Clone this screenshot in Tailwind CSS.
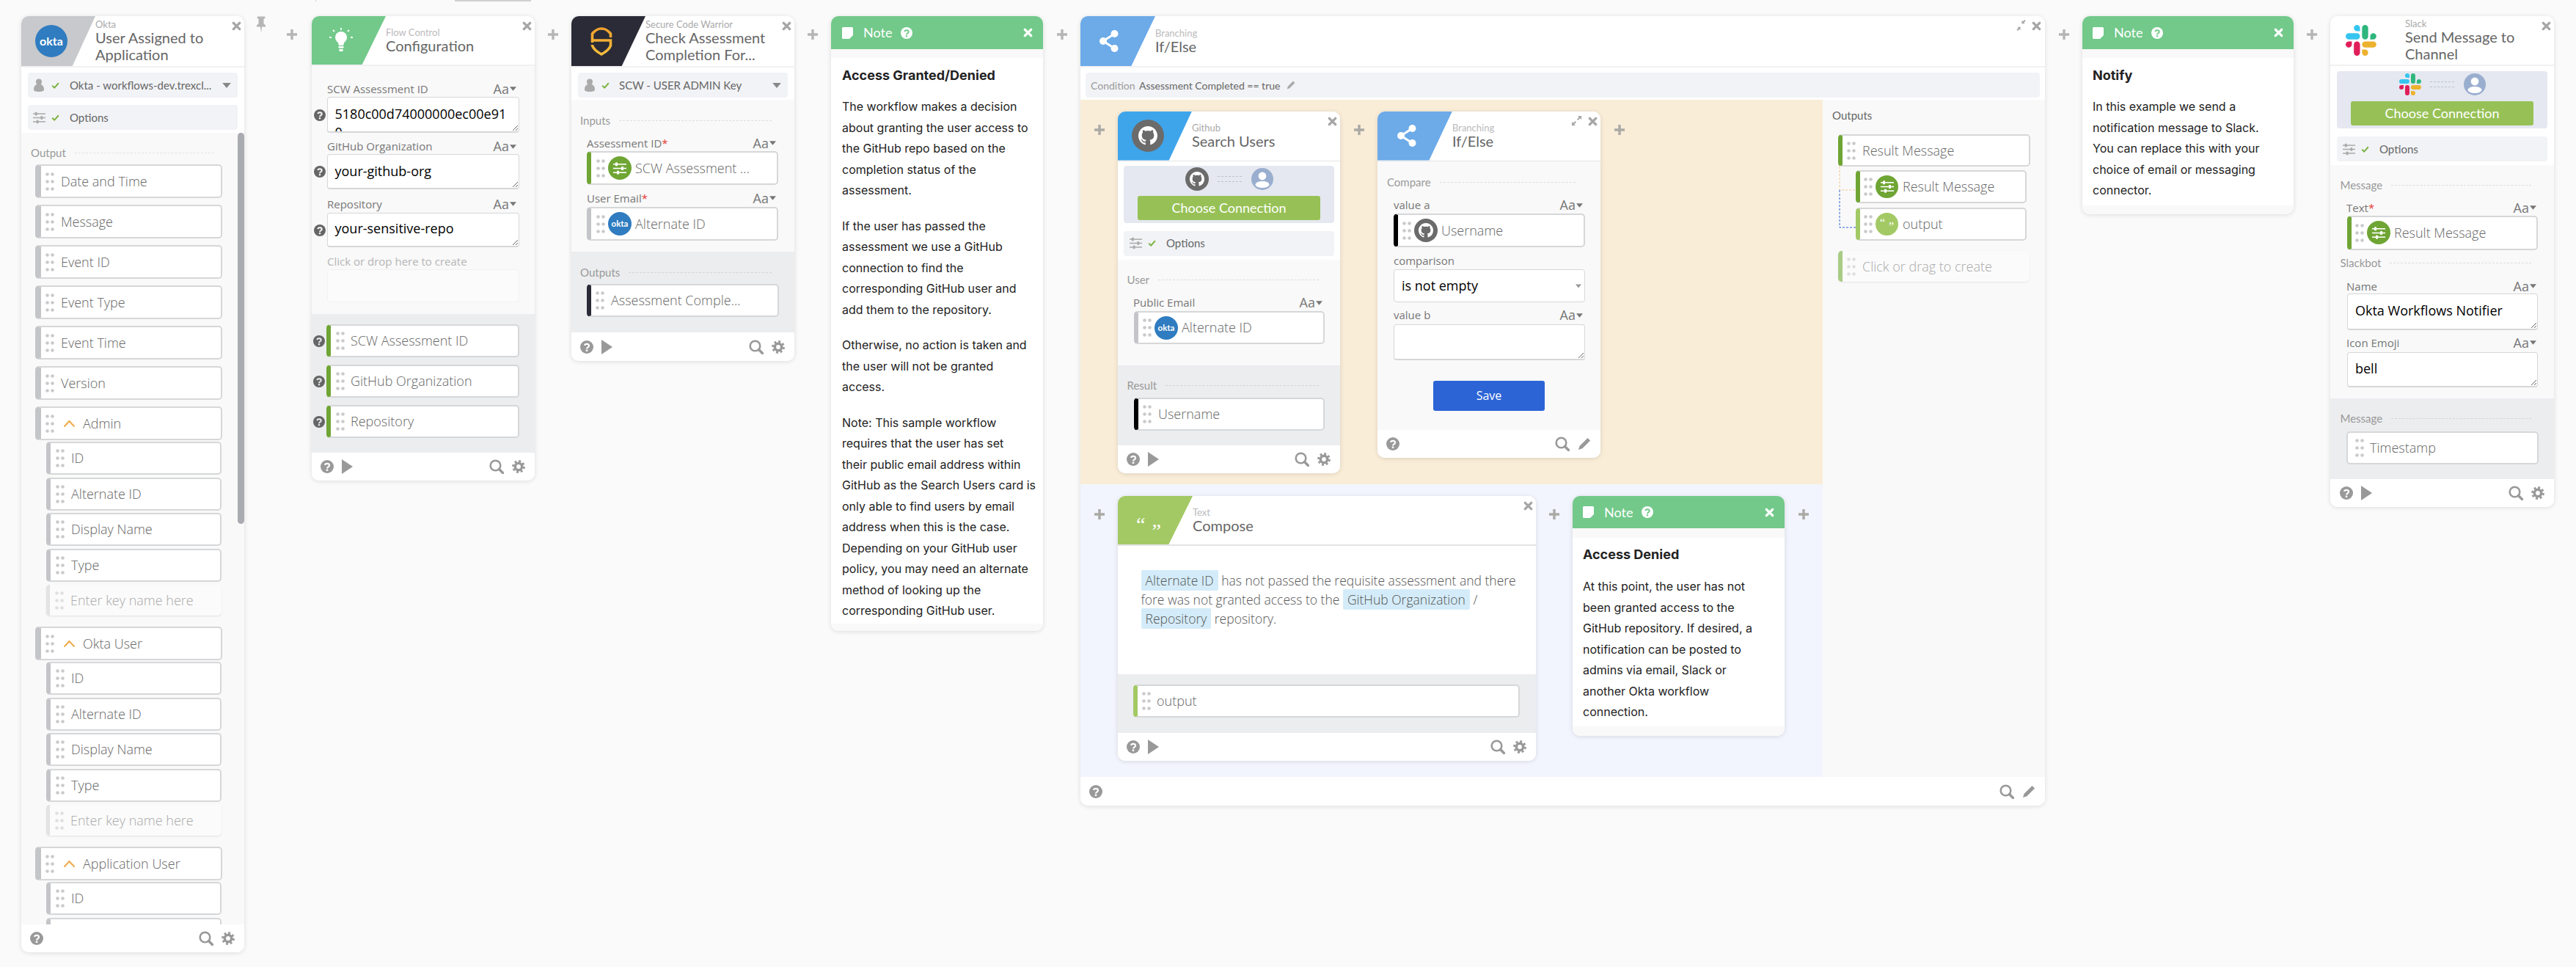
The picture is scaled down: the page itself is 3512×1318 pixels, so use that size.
<!DOCTYPE html>
<html lang="en">
<head>
  <meta charset="UTF-8" />
  <title>Okta Workflows</title>
  <script src="https://cdn.jsdelivr.net/npm/@tailwindcss/browser@4"></script>
</head>
<body class="bg-[#fafafa]">

<!-- icon sprite -->
<svg class="absolute w-0 h-0 overflow-hidden">
  <defs>
    <mask id="qmask" maskUnits="userSpaceOnUse" x="0" y="0" width="20" height="20"><rect width="20" height="20" fill="#fff"/><path d="M6.800 7.600C7 4.600 13.400 4.600 13.400 8c0 2.400-3.400 2.400-3.400 4.800" fill="none" stroke="#000" stroke-width="2.400"/><rect x="8.600" y="14" width="2.800" height="2.600" fill="#000"/></mask>
    <linearGradient id="sg" x1="0" y1="0" x2="0" y2="1"><stop offset="0" stop-color="#f0a22e"/><stop offset="1" stop-color="#f3bd3d"/></linearGradient>
  </defs>
  <symbol id="grip" viewBox="0 0 12 25"><g fill="currentColor"><circle cx="2.500" cy="2.500" r="2.300"/><circle cx="9.500" cy="2.500" r="2.300"/><circle cx="2.500" cy="12.500" r="2.300"/><circle cx="9.500" cy="12.500" r="2.300"/><circle cx="2.500" cy="22.500" r="2.300"/><circle cx="9.500" cy="22.500" r="2.300"/></g></symbol>
  <symbol id="close" viewBox="0 0 14 14"><path d="M2.500 2.500l9 9M11.500 2.500l-9 9" stroke="currentColor" stroke-width="3.600" stroke-linecap="round" fill="none"/></symbol>
  <symbol id="plus" viewBox="0 0 14 14"><path d="M5.300 0h3.400v5.300H14v3.400H8.700V14H5.300V8.700H0V5.300h5.300z" fill="currentColor"/></symbol>
  <symbol id="help" viewBox="0 0 20 20"><circle cx="10" cy="10" r="10" fill="currentColor" mask="url(#qmask)"/></symbol>
  <symbol id="search" viewBox="0 0 20 20"><circle cx="8.500" cy="8.500" r="6.800" fill="none" stroke="currentColor" stroke-width="2.600"/><path d="M13.500 13.500l5 5" stroke="currentColor" stroke-width="3.400" stroke-linecap="round"/></symbol>
  <symbol id="gear" viewBox="0 0 20 20"><circle cx="10" cy="10" r="5.200" fill="none" stroke="currentColor" stroke-width="4"/><circle cx="10" cy="10" r="8.200" fill="none" stroke="currentColor" stroke-width="3.400" stroke-dasharray="3.200 3.240"/></symbol>
  <symbol id="play" viewBox="0 0 15 20"><path d="M0 0l15 10L0 20z" fill="currentColor"/></symbol>
  <symbol id="sliders" viewBox="0 0 18 17"><g fill="currentColor"><rect y="2" width="18" height="1.600"/><rect y="7.700" width="18" height="1.600"/><rect y="13.400" width="18" height="1.600"/><rect x="3" y="0.400" width="3" height="4.800"/><rect x="11" y="6.100" width="3" height="4.800"/><rect x="5" y="11.800" width="3" height="4.800"/></g></symbol>
  <symbol id="check" viewBox="0 0 12 10"><path d="M1.200 5.200l3.400 3.200L10.800 1.400" fill="none" stroke="currentColor" stroke-width="2.200"/></symbol>
  <symbol id="person" viewBox="0 0 14 18"><circle cx="7" cy="4.500" r="4" fill="currentColor"/><path d="M0 15c0-4 2-6.500 4.500-7h5c2.500.5 4.500 3 4.500 7 0 2-2 3-7 3s-7-1-7-3z" fill="currentColor"/></symbol>
  <symbol id="usercircle" viewBox="0 0 30 30"><circle cx="15" cy="15" r="15" fill="#9aaecf"/><circle cx="15" cy="11" r="5.400" fill="#fff"/><ellipse cx="15" cy="22.500" rx="9.500" ry="4.600" fill="#fff"/></symbol>
  <symbol id="share" viewBox="0 0 26 30"><g fill="currentColor"><circle cx="20.500" cy="5" r="5"/><circle cx="5" cy="15" r="5"/><circle cx="20.500" cy="25" r="5"/></g><path d="M20.500 5L5 15l15.500 10" fill="none" stroke="currentColor" stroke-width="3"/></symbol>
  <symbol id="octo" viewBox="0 0 16 16"><path fill="currentColor" d="M8 0C3.580 0 0 3.580 0 8c0 3.540 2.290 6.530 5.470 7.590.4.07.55-.17.55-.38 0-.19-.01-.82-.01-1.490-2.010.37-2.530-.49-2.690-.94-.09-.23-.48-.94-.82-1.130-.28-.15-.68-.52-.01-.53.63-.01 1.080.58 1.230.82.72 1.210 1.870.87 2.330.66.07-.52.28-.87.51-1.070-1.780-.2-3.640-.89-3.640-3.950 0-.87.31-1.590.82-2.150-.08-.2-.36-1.020.08-2.120 0 0 .67-.21 2.200.82.64-.18 1.320-.27 2-.27.68 0 1.360.09 2 .27 1.530-1.040 2.200-.82 2.200-.82.44 1.100.16 1.920.08 2.120.51.56.82 1.270.82 2.150 0 3.070-1.870 3.750-3.650 3.950.29.25.54.73.54 1.480 0 1.070-.01 1.930-.01 2.200 0 .21.15.46.55.38A8.013 8.013 0 0016 8c0-4.420-3.580-8-8-8z"/></symbol>
  <symbol id="slack" viewBox="0 0 54 54">
    <path fill="#36C5F0" d="M19.712.133a5.381 5.381 0 0 0-5.376 5.387 5.381 5.381 0 0 0 5.376 5.386h5.376V5.520A5.381 5.381 0 0 0 19.712.133m0 14.365H5.376A5.381 5.381 0 0 0 0 19.884a5.381 5.381 0 0 0 5.376 5.387h14.336a5.381 5.381 0 0 0 5.376-5.387 5.381 5.381 0 0 0-5.376-5.386"/>
    <path fill="#2EB67D" d="M53.760 19.884a5.381 5.381 0 0 0-5.376-5.386 5.381 5.381 0 0 0-5.376 5.386v5.387h5.376a5.381 5.381 0 0 0 5.376-5.387m-14.336 0V5.520A5.381 5.381 0 0 0 34.048.133a5.381 5.381 0 0 0-5.376 5.387v14.364a5.381 5.381 0 0 0 5.376 5.387 5.381 5.381 0 0 0 5.376-5.387"/>
    <path fill="#ECB22E" d="M34.048 54a5.381 5.381 0 0 0 5.376-5.387 5.381 5.381 0 0 0-5.376-5.386h-5.376v5.386A5.381 5.381 0 0 0 34.048 54m0-14.365h14.336a5.381 5.381 0 0 0 5.376-5.386 5.381 5.381 0 0 0-5.376-5.387H34.048a5.381 5.381 0 0 0-5.376 5.387 5.381 5.381 0 0 0 5.376 5.386"/>
    <path fill="#E01E5A" d="M0 34.249a5.381 5.381 0 0 0 5.376 5.386 5.381 5.381 0 0 0 5.376-5.386v-5.387H5.376A5.381 5.381 0 0 0 0 34.250m14.336-.001v14.364A5.381 5.381 0 0 0 19.712 54a5.381 5.381 0 0 0 5.376-5.387V34.250a5.381 5.381 0 0 0-5.376-5.387 5.381 5.381 0 0 0-5.376 5.387"/>
  </symbol>
  <symbol id="pencil" viewBox="0 0 20 20"><path d="M15 1l4 4L7 17l-6 2 2-6z" fill="currentColor"/></symbol>
  <symbol id="expand" viewBox="0 0 16 16"><path d="M9.500 1H15v5.500l-2-2-3 3-1.500-1.500 3-3zM6.500 15H1V9.500l2 2 3-3 1.500 1.500-3 3z" fill="currentColor"/></symbol>
  <symbol id="collapse" viewBox="0 0 16 16"><path d="M14.500 1.500l-2.500 2.500 1.500 1.500H9V1l1.500 1.500L13 0zM1.500 14.500L4 12l-1.500-1.500H7V15l-1.500-1.500L3 16z" fill="currentColor"/></symbol>
  <symbol id="note" viewBox="0 0 15 16"><path d="M1.500 0h12A1.500 1.500 0 0115 1.500V11l-5 5H1.500A1.500 1.500 0 010 14.500v-13A1.500 1.500 0 011.500 0z" fill="currentColor"/></symbol>
  <symbol id="pin" viewBox="0 0 16 24"><path d="M2 0h12v3h-2v8l3 3v2H9.200l-1 8h-.4l-1-8H1v-2l3-3V3H2z" fill="currentColor"/></symbol>
  <symbol id="bulb" viewBox="0 0 32 34"><g fill="#fff"><circle cx="16" cy="13" r="8"/><path d="M11.500 19h9l-1.500 5h-6z"/><rect x="12.500" y="25" width="7" height="2.600"/><rect x="13.500" y="29" width="5" height="3"/></g><path d="M16 0v3M5 3l2 2M27 3l-2 2M0 13h3M29 13h3" stroke="#fff" stroke-width="1.800"/></symbol>
  <symbol id="shield" viewBox="0 0 30 39"><path d="M2.500 21V9C7 3.500 10 2 15 2s8 1.500 12.500 7v5M2.500 18h25v7c-1.500 5-7 9-12.500 12C9.500 34 4 30 2.500 25v-1" fill="none" stroke="url(#sg)" stroke-width="3.600"/></symbol>
  <symbol id="caret" viewBox="0 0 10 6"><path d="M0 0h10L5 6z" fill="currentColor"/></symbol>
  <symbol id="chevron" viewBox="0 0 17 11"><path d="M1.500 9.500L8.500 2l7 7.500" fill="none" stroke="currentColor" stroke-width="2"/></symbol>
</svg>

<div class="relative w-[3512px] h-[1318px] overflow-hidden bg-[#fafafa] font-['Open_Sans',sans-serif] font-light text-[18px] text-[#666] flex items-start pl-[29px] pt-[22px]">
  <div class="absolute left-[620px] top-0 w-[104px] h-[2px] bg-[#d0d0d0]"></div>
  <div class="absolute left-[430px] top-0 w-px h-[2px] bg-[#d0d0d0]"></div>

  <!-- Okta trigger -->
  <div class="w-[304px] h-[1276px] shrink-0 rounded-[10px] overflow-hidden bg-[#f9f9f9] shadow-[0_1px_6px_rgba(0,0,0,0.12)] flex flex-col">
    <div class="relative h-[68px] shrink-0 flex bg-white font-['Lato',sans-serif] font-normal">
      <div class="w-[101px] h-full bg-[#c8c9cc] [clip-path:polygon(0_0,100%_0,69%_100%,0_100%)] flex items-center pl-[19px]">
        <span class="w-[44px] h-[44px] rounded-full bg-[#2f7cc0] text-white text-[16px] font-bold flex items-center justify-center">okta</span>
      </div>
      <div class="flex flex-col justify-center">
        <span class="text-[13px] leading-[14px] text-[#aaa]">Okta</span>
        <span class="text-[20px] leading-[23px] text-[#666]">User Assigned to<br>Application</span>
      </div>
      <svg class="absolute top-[7px] right-[4px] w-[13px] h-[13px] text-[#a6a6a6]"><use href="#close"/></svg>
    </div>
    <div class="h-[91px] shrink-0 bg-white px-[9px] pt-[7px] border-t-2 border-[#f1f1f2] text-[15px] font-normal text-[#666] font-['Lato',sans-serif]">
      <div class="h-[34px] rounded-[4px] bg-[#f2f3f6] flex items-center pl-[8px] pr-[9px]">
        <svg class="w-[14px] h-[18px] text-[#aaa]"><use href="#person"/></svg>
        <svg class="w-[11px] h-[9px] ml-[10px] text-[#7cb342]"><use href="#check"/></svg>
        <span class="ml-[14px] flex-1">Okta - workflows-dev.trexcl...</span>
        <svg class="w-[12px] h-[7px] text-[#888]"><use href="#caret"/></svg>
      </div>
      <div class="h-[34px] mt-[10px] rounded-[4px] bg-[#f2f3f6] flex items-center pl-[7px]">
        <svg class="w-[17px] h-[17px] text-[#aaa]"><use href="#sliders"/></svg>
        <svg class="w-[11px] h-[9px] ml-[8px] text-[#7cb342]"><use href="#check"/></svg>
        <span class="ml-[14px]">Options</span>
      </div>
    </div>
    <div class="relative flex-1 overflow-hidden pt-[17px]">
      <div class="absolute right-0 top-0 w-[9px] h-[533px] rounded-[5px] bg-[#a9abb0]"></div>
      <div class="flex items-center h-5 ml-[13px] w-[250px] mb-[6px] font-['Lato',sans-serif] font-normal text-[15px] text-[#999]">Output<span class="flex-1 ml-[12px] border-t border-dashed border-[#e2e2e2]"></span></div>

      <div class="flex items-center h-[46px] w-[255px] ml-[19px] mb-[9px] bg-white rounded-[5px] border-2 border-[#d6d7d9] border-l-[8px] border-l-[#c4c5c8]"><svg class="w-[12px] h-[25px] ml-[6px] mr-[9px] text-[#c9cacc]"><use href="#grip"/></svg>Date and Time</div>
      <div class="flex items-center h-[46px] w-[255px] ml-[19px] mb-[9px] bg-white rounded-[5px] border-2 border-[#d6d7d9] border-l-[8px] border-l-[#c4c5c8]"><svg class="w-[12px] h-[25px] ml-[6px] mr-[9px] text-[#c9cacc]"><use href="#grip"/></svg>Message</div>
      <div class="flex items-center h-[46px] w-[255px] ml-[19px] mb-[9px] bg-white rounded-[5px] border-2 border-[#d6d7d9] border-l-[8px] border-l-[#c4c5c8]"><svg class="w-[12px] h-[25px] ml-[6px] mr-[9px] text-[#c9cacc]"><use href="#grip"/></svg>Event ID</div>
      <div class="flex items-center h-[46px] w-[255px] ml-[19px] mb-[9px] bg-white rounded-[5px] border-2 border-[#d6d7d9] border-l-[8px] border-l-[#c4c5c8]"><svg class="w-[12px] h-[25px] ml-[6px] mr-[9px] text-[#c9cacc]"><use href="#grip"/></svg>Event Type</div>
      <div class="flex items-center h-[46px] w-[255px] ml-[19px] mb-[9px] bg-white rounded-[5px] border-2 border-[#d6d7d9] border-l-[8px] border-l-[#c4c5c8]"><svg class="w-[12px] h-[25px] ml-[6px] mr-[9px] text-[#c9cacc]"><use href="#grip"/></svg>Event Time</div>
      <div class="flex items-center h-[46px] w-[255px] ml-[19px] mb-[9px] bg-white rounded-[5px] border-2 border-[#d6d7d9] border-l-[8px] border-l-[#c4c5c8]"><svg class="w-[12px] h-[25px] ml-[6px] mr-[9px] text-[#c9cacc]"><use href="#grip"/></svg>Version</div>

      <div class="flex items-center h-[46px] w-[255px] ml-[19px] mb-[2px] bg-white rounded-[5px] border-2 border-[#d6d7d9] border-l-[8px] border-l-[#c4c5c8]"><svg class="w-[12px] h-[25px] ml-[6px] text-[#c9cacc]"><use href="#grip"/></svg><svg class="w-[17px] h-[11px] ml-[12px] mr-[10px] text-[#f0a94a]"><use href="#chevron"/></svg>Admin</div>
      <div class="flex items-center h-[45px] w-[239px] ml-[34px] mb-[3.5px] bg-white rounded-[5px] border-2 border-[#d6d7d9] border-l-[6px] border-l-[#c4c5c8]"><svg class="w-[12px] h-[25px] ml-[7px] mr-[9px] text-[#c9cacc]"><use href="#grip"/></svg>ID</div>
      <div class="flex items-center h-[45px] w-[239px] ml-[34px] mb-[3.5px] bg-white rounded-[5px] border-2 border-[#d6d7d9] border-l-[6px] border-l-[#c4c5c8]"><svg class="w-[12px] h-[25px] ml-[7px] mr-[9px] text-[#c9cacc]"><use href="#grip"/></svg>Alternate ID</div>
      <div class="flex items-center h-[45px] w-[239px] ml-[34px] mb-[3.5px] bg-white rounded-[5px] border-2 border-[#d6d7d9] border-l-[6px] border-l-[#c4c5c8]"><svg class="w-[12px] h-[25px] ml-[7px] mr-[9px] text-[#c9cacc]"><use href="#grip"/></svg>Display Name</div>
      <div class="flex items-center h-[45px] w-[239px] ml-[34px] mb-[4.5px] bg-white rounded-[5px] border-2 border-[#d6d7d9] border-l-[6px] border-l-[#c4c5c8]"><svg class="w-[12px] h-[25px] ml-[7px] mr-[9px] text-[#c9cacc]"><use href="#grip"/></svg>Type</div>
      <div class="flex items-center h-[42px] w-[239px] ml-[34px] mb-[15px] bg-[#fbfbfb] rounded-[5px] border-l-[5px] border-l-[#e2e3e5] shadow-[0_1px_2px_rgba(0,0,0,0.1)] text-[#aaa]"><svg class="w-[12px] h-[25px] ml-[7px] mr-[9px] text-[#dedfe0]"><use href="#grip"/></svg>Enter key name here</div>

      <div class="flex items-center h-[46px] w-[255px] ml-[19px] mb-[2px] bg-white rounded-[5px] border-2 border-[#d6d7d9] border-l-[8px] border-l-[#c4c5c8]"><svg class="w-[12px] h-[25px] ml-[6px] text-[#c9cacc]"><use href="#grip"/></svg><svg class="w-[17px] h-[11px] ml-[12px] mr-[10px] text-[#f0a94a]"><use href="#chevron"/></svg>Okta User</div>
      <div class="flex items-center h-[45px] w-[239px] ml-[34px] mb-[3.5px] bg-white rounded-[5px] border-2 border-[#d6d7d9] border-l-[6px] border-l-[#c4c5c8]"><svg class="w-[12px] h-[25px] ml-[7px] mr-[9px] text-[#c9cacc]"><use href="#grip"/></svg>ID</div>
      <div class="flex items-center h-[45px] w-[239px] ml-[34px] mb-[3.5px] bg-white rounded-[5px] border-2 border-[#d6d7d9] border-l-[6px] border-l-[#c4c5c8]"><svg class="w-[12px] h-[25px] ml-[7px] mr-[9px] text-[#c9cacc]"><use href="#grip"/></svg>Alternate ID</div>
      <div class="flex items-center h-[45px] w-[239px] ml-[34px] mb-[3.5px] bg-white rounded-[5px] border-2 border-[#d6d7d9] border-l-[6px] border-l-[#c4c5c8]"><svg class="w-[12px] h-[25px] ml-[7px] mr-[9px] text-[#c9cacc]"><use href="#grip"/></svg>Display Name</div>
      <div class="flex items-center h-[45px] w-[239px] ml-[34px] mb-[4.5px] bg-white rounded-[5px] border-2 border-[#d6d7d9] border-l-[6px] border-l-[#c4c5c8]"><svg class="w-[12px] h-[25px] ml-[7px] mr-[9px] text-[#c9cacc]"><use href="#grip"/></svg>Type</div>
      <div class="flex items-center h-[42px] w-[239px] ml-[34px] mb-[15px] bg-[#fbfbfb] rounded-[5px] border-l-[5px] border-l-[#e2e3e5] shadow-[0_1px_2px_rgba(0,0,0,0.1)] text-[#aaa]"><svg class="w-[12px] h-[25px] ml-[7px] mr-[9px] text-[#dedfe0]"><use href="#grip"/></svg>Enter key name here</div>

      <div class="flex items-center h-[46px] w-[255px] ml-[19px] mb-[2px] bg-white rounded-[5px] border-2 border-[#d6d7d9] border-l-[8px] border-l-[#c4c5c8]"><svg class="w-[12px] h-[25px] ml-[6px] text-[#c9cacc]"><use href="#grip"/></svg><svg class="w-[17px] h-[11px] ml-[12px] mr-[10px] text-[#f0a94a]"><use href="#chevron"/></svg>Application User</div>
      <div class="flex items-center h-[45px] w-[239px] ml-[34px] mb-[3.5px] bg-white rounded-[5px] border-2 border-[#d6d7d9] border-l-[6px] border-l-[#c4c5c8]"><svg class="w-[12px] h-[25px] ml-[7px] mr-[9px] text-[#c9cacc]"><use href="#grip"/></svg>ID</div>
      <div class="flex items-center h-[45px] w-[239px] ml-[34px] mb-[3.5px] bg-white rounded-[5px] border-2 border-[#d6d7d9] border-l-[6px] border-l-[#c4c5c8]"><svg class="w-[12px] h-[25px] ml-[7px] mr-[9px] text-[#c9cacc]"><use href="#grip"/></svg></div>
    </div>
    <div class="h-[38px] shrink-0 bg-white flex items-center pl-[12px] text-[#999]">
      <svg class="w-[18px] h-[18px]"><use href="#help"/></svg>
      <span class="flex-1"></span>
      <svg class="w-[20px] h-[20px]"><use href="#search"/></svg>
      <svg class="w-[18px] h-[18px] ml-[11px] mr-[13px]"><use href="#gear"/></svg>
    </div>
  </div>

  <!-- pin + plus -->
  <div class="w-[92px] shrink-0 flex items-start text-[#b5b5b5]">
    <svg class="w-[14px] h-[24px] ml-[16px] mt-[-1px]"><use href="#pin"/></svg>
    <svg class="w-[14px] h-[14px] ml-[28px] mt-[18px]"><use href="#plus"/></svg>
  </div>

  <!-- Configuration -->
  <div class="w-[304px] h-[633px] shrink-0 rounded-[10px] overflow-hidden bg-white shadow-[0_1px_6px_rgba(0,0,0,0.12)] flex flex-col">
    <div class="relative h-[68px] shrink-0 flex bg-white font-['Lato',sans-serif] font-normal border-b-2 border-[#f1f1f2]">
      <div class="w-[101px] h-full bg-[#72c98a] [clip-path:polygon(0_0,100%_0,68%_100%,0_100%)] flex items-center pl-[24px]">
        <svg class="w-[32px] h-[34px]"><use href="#bulb"/></svg>
      </div>
      <div class="flex flex-col justify-center">
        <span class="text-[13px] leading-[14px] text-[#bbb]">Flow Control</span>
        <span class="text-[20px] leading-[23px] text-[#666]">Configuration</span>
      </div>
      <svg class="absolute top-[7px] right-[4px] w-[13px] h-[13px] text-[#a6a6a6]"><use href="#close"/></svg>
    </div>
    <div class="h-[338px] shrink-0 bg-[#f9f9f9] pt-[21px]">
      <div class="ml-[21px] w-[258px] h-5 flex items-center justify-between text-[15px] font-normal text-[#777]"><span>SCW Assessment ID</span><span class="flex items-center text-[18px]">Aa<svg class="w-[9px] h-[6px] ml-[1px]"><use href="#caret"/></svg></span></div>
      <div class="flex items-center ml-[3px] mt-[1px]">
        <svg class="w-4 h-4 text-[#666]"><use href="#help"/></svg>
        <textarea class="ml-[1.5px] w-[262px] h-[49px] rounded-[4px] border border-b-2 border-[#d6d7d9] bg-white pl-[10px] pr-[10px] pt-[10px] text-[18px] leading-[25px] font-normal text-black overflow-hidden">5180c00d74000000ec00e910</textarea>
      </div>
      <div class="ml-[21px] mt-[8.5px] w-[258px] h-5 flex items-center justify-between text-[15px] font-normal text-[#777]"><span>GitHub Organization</span><span class="flex items-center text-[18px]">Aa<svg class="w-[9px] h-[6px] ml-[1px]"><use href="#caret"/></svg></span></div>
      <div class="flex items-center ml-[3px] mt-[0.5px]">
        <svg class="w-4 h-4 text-[#666]"><use href="#help"/></svg>
        <textarea class="ml-[1.5px] w-[262px] h-[48px] rounded-[4px] border border-b-2 border-[#d6d7d9] bg-white pl-[10px] pr-[10px] pt-[10px] text-[18px] leading-[25px] font-normal text-black overflow-hidden">your-github-org</textarea>
      </div>
      <div class="ml-[21px] mt-[10px] w-[258px] h-5 flex items-center justify-between text-[15px] font-normal text-[#777]"><span>Repository</span><span class="flex items-center text-[18px]">Aa<svg class="w-[9px] h-[6px] ml-[1px]"><use href="#caret"/></svg></span></div>
      <div class="flex items-center ml-[3px] mt-[2px]">
        <svg class="w-4 h-4 text-[#666]"><use href="#help"/></svg>
        <textarea class="ml-[1.5px] w-[262px] h-[47px] rounded-[4px] border border-b-2 border-[#d6d7d9] bg-white pl-[10px] pr-[10px] pt-[8px] text-[18px] leading-[25px] font-normal text-black overflow-hidden">your-sensitive-repo</textarea>
      </div>
      <div class="ml-[21px] mt-[9px] h-5 flex items-center text-[15px] font-normal text-[#b5b5b5]">Click or drop here to create</div>
      <div class="ml-[20.500px] mt-[1px] w-[262px] h-[45px] rounded-[4px] border border-[#f2f2f3] bg-[#fbfbfb]"></div>
    </div>
    <div class="h-[189px] shrink-0 bg-[#ecedef] pt-[14px]">
      <div class="flex items-center ml-[2px] mb-[10px]"><svg class="w-4 h-4 mr-[2px] text-[#666]"><use href="#help"/></svg><div class="flex items-center h-[45px] w-[263px] bg-white rounded-[5px] border-2 border-[#d6d7d9] border-l-[6px] border-l-[#6fa534]"><svg class="w-[12px] h-[25px] ml-[7px] mr-[8px] text-[#c9cacc]"><use href="#grip"/></svg>SCW Assessment ID</div></div>
      <div class="flex items-center ml-[2px] mb-[10px]"><svg class="w-4 h-4 mr-[2px] text-[#666]"><use href="#help"/></svg><div class="flex items-center h-[45px] w-[263px] bg-white rounded-[5px] border-2 border-[#d6d7d9] border-l-[6px] border-l-[#6fa534]"><svg class="w-[12px] h-[25px] ml-[7px] mr-[8px] text-[#c9cacc]"><use href="#grip"/></svg>GitHub Organization</div></div>
      <div class="flex items-center ml-[2px]"><svg class="w-4 h-4 mr-[2px] text-[#666]"><use href="#help"/></svg><div class="flex items-center h-[45px] w-[263px] bg-white rounded-[5px] border-2 border-[#d6d7d9] border-l-[6px] border-l-[#6fa534]"><svg class="w-[12px] h-[25px] ml-[7px] mr-[8px] text-[#c9cacc]"><use href="#grip"/></svg>Repository</div></div>
    </div>
    <div class="flex-1 bg-white flex items-center pl-[12px] text-[#999]">
      <svg class="w-[18px] h-[18px]"><use href="#help"/></svg>
      <svg class="w-[15px] h-[20px] ml-[11px]"><use href="#play"/></svg>
      <span class="flex-1"></span>
      <svg class="w-[20px] h-[20px]"><use href="#search"/></svg>
      <svg class="w-[18px] h-[18px] ml-[11px] mr-[13px]"><use href="#gear"/></svg>
    </div>
  </div>

  <div class="w-[50px] shrink-0 flex justify-center pt-[18px] text-[#b5b5b5]"><svg class="w-[14px] h-[14px]"><use href="#plus"/></svg></div>

  <!-- Secure Code Warrior -->
  <div class="w-[304px] h-[470px] shrink-0 rounded-[10px] overflow-hidden bg-white shadow-[0_1px_6px_rgba(0,0,0,0.12)] flex flex-col">
    <div class="relative h-[68px] shrink-0 flex bg-white font-['Lato',sans-serif] font-normal">
      <div class="w-[101px] h-full bg-[#2a2b36] [clip-path:polygon(0_0,100%_0,68%_100%,0_100%)] flex items-center pl-[26px]">
        <svg class="w-[30px] h-[39px]"><use href="#shield"/></svg>
      </div>
      <div class="flex flex-col justify-center">
        <span class="text-[13px] leading-[14px] text-[#aaa]">Secure Code Warrior</span>
        <span class="text-[20px] leading-[23px] text-[#666]">Check Assessment<br>Completion For...</span>
      </div>
      <svg class="absolute top-[7px] right-[4px] w-[13px] h-[13px] text-[#a6a6a6]"><use href="#close"/></svg>
    </div>
    <div class="h-[46px] shrink-0 bg-white px-[9px] pt-[7px] border-t-2 border-[#f1f1f2] text-[15px] font-normal text-[#666] font-['Lato',sans-serif]">
      <div class="h-[34px] rounded-[4px] bg-[#f2f3f6] flex items-center pl-[9px] pr-[9px]">
        <svg class="w-[14px] h-[18px] text-[#aaa]"><use href="#person"/></svg>
        <svg class="w-[11px] h-[9px] ml-[9px] text-[#7cb342]"><use href="#check"/></svg>
        <span class="ml-[13px] flex-1">SCW - USER ADMIN Key</span>
        <svg class="w-[12px] h-[7px] text-[#888]"><use href="#caret"/></svg>
      </div>
    </div>
    <div class="h-[207px] shrink-0 bg-[#f9f9f9] pt-[18px]">
      <div class="flex items-center h-5 ml-[12px] w-[261px] font-['Lato',sans-serif] font-normal text-[15px] text-[#999]">Inputs<span class="flex-1 ml-[12px] border-t border-dashed border-[#ddd]"></span></div>
      <div class="ml-[21px] mt-[11px] w-[258px] h-5 flex items-center justify-between text-[15px] font-normal text-[#777]"><span>Assessment ID<span class="text-[#e53935]">*</span></span><span class="flex items-center text-[18px]">Aa<svg class="w-[9px] h-[6px] ml-[1px]"><use href="#caret"/></svg></span></div>
      <div class="flex items-center h-[46px] w-[261px] ml-[21px] mt-[1px] bg-white rounded-[5px] border-2 border-[#d6d7d9] border-l-[6px] border-l-[#6fa534]"><svg class="w-[12px] h-[25px] ml-[7px] text-[#c9cacc]"><use href="#grip"/></svg><span class="w-8 h-8 ml-[4px] mr-[5px] rounded-full bg-[#6fa534] text-white flex items-center justify-center"><svg class="w-[18px] h-[17px]"><use href="#sliders"/></svg></span>SCW Assessment ...</div>
      <div class="ml-[21px] mt-[8px] w-[258px] h-5 flex items-center justify-between text-[15px] font-normal text-[#777]"><span>User Email<span class="text-[#e53935]">*</span></span><span class="flex items-center text-[18px]">Aa<svg class="w-[9px] h-[6px] ml-[1px]"><use href="#caret"/></svg></span></div>
      <div class="flex items-center h-[46px] w-[261px] ml-[21px] mt-[2px] bg-white rounded-[5px] border-2 border-[#d6d7d9] border-l-[6px] border-l-[#c4c5c8]"><svg class="w-[12px] h-[25px] ml-[7px] text-[#c9cacc]"><use href="#grip"/></svg><span class="w-8 h-8 ml-[4px] mr-[5px] rounded-full bg-[#2f7cc0] text-white text-[11.500px] font-bold font-['Lato',sans-serif] flex items-center justify-center">okta</span>Alternate ID</div>
    </div>
    <div class="h-[110px] shrink-0 bg-[#ecedef] pt-[18px]">
      <div class="flex items-center h-5 ml-[12px] w-[261px] font-['Lato',sans-serif] font-normal text-[15px] text-[#999]">Outputs<span class="flex-1 ml-[12px] border-t border-dashed border-[#d5d5d5]"></span></div>
      <div class="flex items-center h-[45px] w-[262px] ml-[21px] mt-[6px] bg-white rounded-[5px] border-2 border-[#d6d7d9] border-l-[6px] border-l-[#2a2b36]"><svg class="w-[12px] h-[25px] ml-[6px] mr-[9px] text-[#c9cacc]"><use href="#grip"/></svg>Assessment Comple...</div>
    </div>
    <div class="flex-1 bg-white flex items-center pl-[12px] text-[#999]">
      <svg class="w-[18px] h-[18px]"><use href="#help"/></svg>
      <svg class="w-[15px] h-[20px] ml-[11px]"><use href="#play"/></svg>
      <span class="flex-1"></span>
      <svg class="w-[20px] h-[20px]"><use href="#search"/></svg>
      <svg class="w-[18px] h-[18px] ml-[11px] mr-[13px]"><use href="#gear"/></svg>
    </div>
  </div>

  <div class="w-[50px] shrink-0 flex justify-center pt-[18px] text-[#b5b5b5]"><svg class="w-[14px] h-[14px]"><use href="#plus"/></svg></div>

  <!-- Note: Access Granted/Denied -->
  <div class="w-[289px] shrink-0 rounded-[10px] overflow-hidden bg-white shadow-[0_1px_6px_rgba(0,0,0,0.12)]">
    <div class="h-[45px] bg-[#72c98a] text-white flex items-center pl-[15px] pr-[14px] font-['Lato',sans-serif] font-normal">
      <svg class="w-[15px] h-[16px]"><use href="#note"/></svg>
      <span class="ml-[14px] text-[18px]">Note</span>
      <svg class="w-4 h-4 ml-[12px]"><use href="#help"/></svg>
      <span class="flex-1"></span>
      <svg class="w-[13px] h-[13px]"><use href="#close"/></svg>
    </div>
    <div class="h-[12px] bg-[#f9f9f9]"></div>
    <div class="h-[771px] px-[15px] pt-[10px] font-['Inter',sans-serif] font-normal text-[16px] leading-[28.500px] text-[#222] whitespace-nowrap">
      <h3 class="text-[18px] font-bold leading-[28px] mb-[14px]">Access Granted/Denied</h3>
      <p class="mb-[20px]">The workflow makes a decision<br>about granting the user access to<br>the GitHub repo based on the<br>completion status of the<br>assessment.</p>
      <p class="mb-[20px]">If the user has passed the<br>assessment we use a GitHub<br>connection to find the<br>corresponding GitHub user and<br>add them to the repository.</p>
      <p class="mb-[20px]">Otherwise, no action is taken and<br>the user will not be granted<br>access.</p>
      <p>Note: This sample workflow<br>requires that the user has set<br>their public email address within<br>GitHub as the Search Users card is<br>only able to find users by email<br>address when this is the case.<br>Depending on your GitHub user<br>policy, you may need an alternate<br>method of looking up the<br>corresponding GitHub user.</p>
    </div>
    <div class="h-[10px] bg-[#f9f9f9]"></div>
  </div>

  <div class="w-[51px] shrink-0 flex justify-center pt-[18px] text-[#b5b5b5]"><svg class="w-[14px] h-[14px]"><use href="#plus"/></svg></div>

  <!-- If/Else container -->
  <div class="w-[1315px] shrink-0 rounded-[10px] overflow-hidden bg-white shadow-[0_1px_6px_rgba(0,0,0,0.12)]">
    <div class="relative h-[68px] flex bg-white font-['Lato',sans-serif] font-normal">
      <div class="w-[102px] h-full bg-[#6caae8] [clip-path:polygon(0_0,100%_0,68%_100%,0_100%)] flex items-center pl-[26px] text-white">
        <svg class="w-[26px] h-[30px]"><use href="#share"/></svg>
      </div>
      <div class="flex flex-col justify-center">
        <span class="text-[13px] leading-[14px] text-[#bbb]">Branching</span>
        <span class="text-[20px] leading-[23px] text-[#666]">If/Else</span>
      </div>
      <svg class="absolute top-[5px] right-[25px] w-[15px] h-[15px] text-[#a6a6a6]"><use href="#collapse"/></svg>
      <svg class="absolute top-[7px] right-[5px] w-[13px] h-[13px] text-[#a6a6a6]"><use href="#close"/></svg>
    </div>
    <div class="h-[46px] px-[7px] pt-[7px] border-t-2 border-[#f1f1f2]">
      <div class="h-[34px] rounded-[4px] bg-[#f2f3f6] flex items-center pl-[7px] font-['Lato',sans-serif] font-normal text-[14px]">
        <span class="w-[66px] text-[#999]">Condition</span>
        <span class="text-[#666]">Assessment Completed == true</span>
        <svg class="w-[12px] h-[12px] ml-[9px] text-[#aaa]"><use href="#pencil"/></svg>
      </div>
    </div>
    <div class="flex">
      <div class="w-[1012px] shrink-0">

        <!-- true branch -->
        <div class="h-[524px] bg-[#f9edd8] pt-[15.500px] flex items-start">
          <div class="w-[51px] shrink-0 flex justify-center pt-[18px] text-[#aaa9a5]"><svg class="w-[14px] h-[14px]"><use href="#plus"/></svg></div>

          <!-- Search Users -->
          <div class="w-[303px] h-[493.500px] shrink-0 rounded-[10px] overflow-hidden bg-white shadow-[0_1px_6px_rgba(0,0,0,0.12)] flex flex-col">
            <div class="relative h-[68px] shrink-0 flex bg-white font-['Lato',sans-serif] font-normal border-b border-[#e4e4e6]">
              <div class="w-[101px] h-full bg-[#3fa5ea] [clip-path:polygon(0_0,100%_0,69%_100%,0_100%)] flex items-center pl-[19px]">
                <span class="w-[44px] h-[44px] rounded-full bg-[#6b6b6b] flex items-center justify-center text-white"><svg class="w-[26px] h-[26px]"><use href="#octo"/></svg></span>
              </div>
              <div class="flex flex-col justify-center">
                <span class="text-[13px] leading-[14px] text-[#aaa]">Github</span>
                <span class="text-[20px] leading-[23px] text-[#666]">Search Users</span>
              </div>
              <svg class="absolute top-[7px] right-[4px] w-[13px] h-[13px] text-[#a6a6a6]"><use href="#close"/></svg>
            </div>
            <div class="h-[134px] shrink-0 bg-white px-[8px] pt-[6px]">
              <div class="h-[78px] rounded-[4px] bg-[#e5e8f0] pt-[2px] flex flex-col items-center">
                <div class="h-[32px] flex items-center">
                  <span class="w-[32px] h-[32px] rounded-full bg-[#6b6b6b] flex items-center justify-center text-white"><svg class="w-[20px] h-[20px]"><use href="#octo"/></svg></span>
                  <span class="w-[33px] h-[8px] ml-[12px] mr-[13px] border-y border-dashed border-[#b9c3d6]"></span>
                  <svg class="w-[30px] h-[30px]"><use href="#usercircle"/></svg>
                </div>
                <div class="w-[249px] h-[33px] mt-[7px] rounded-[3px] bg-[#97c156] text-white text-[18px] font-normal font-['Lato',sans-serif] flex items-center justify-center">Choose Connection</div>
              </div>
              <div class="h-[34px] mt-[11px] rounded-[4px] bg-[#f2f3f6] flex items-center pl-[8px] text-[15px] font-normal font-['Lato',sans-serif]">
                <svg class="w-[17px] h-[17px] text-[#aaa]"><use href="#sliders"/></svg>
                <svg class="w-[11px] h-[9px] ml-[8px] text-[#7cb342]"><use href="#check"/></svg>
                <span class="ml-[14px]">Options</span>
              </div>
            </div>
            <div class="h-[144px] shrink-0 bg-[#f9f9f9] pt-[17.500px]">
              <div class="flex items-center h-5 ml-[12.500px] w-[261px] font-['Lato',sans-serif] font-normal text-[15px] text-[#999]">User<span class="flex-1 ml-[12px] border-t border-dashed border-[#ddd]"></span></div>
              <div class="ml-[21px] mt-[11.500px] w-[258px] h-5 flex items-center justify-between text-[15px] font-normal text-[#777]"><span>Public Email</span><span class="flex items-center text-[18px]">Aa<svg class="w-[9px] h-[6px] ml-[1px]"><use href="#caret"/></svg></span></div>
              <div class="flex items-center h-[45px] w-[260px] ml-[22px] mt-[1.500px] bg-white rounded-[5px] border-2 border-[#d6d7d9] border-l-[6px] border-l-[#c4c5c8]"><svg class="w-[12px] h-[25px] ml-[6px] text-[#c9cacc]"><use href="#grip"/></svg><span class="w-8 h-8 ml-[4px] mr-[5px] rounded-full bg-[#2f7cc0] text-white text-[11.500px] font-bold font-['Lato',sans-serif] flex items-center justify-center">okta</span>Alternate ID</div>
            </div>
            <div class="h-[109.500px] shrink-0 bg-[#ecedef] pt-[17.500px]">
              <div class="flex items-center h-5 ml-[12.500px] w-[261px] font-['Lato',sans-serif] font-normal text-[15px] text-[#999]">Result<span class="flex-1 ml-[12px] border-t border-dashed border-[#d5d5d5]"></span></div>
              <div class="flex items-center h-[45px] w-[260px] ml-[22px] mt-[6.500px] bg-white rounded-[5px] border-2 border-[#d6d7d9] border-l-[6px] border-l-black"><svg class="w-[12px] h-[25px] ml-[6px] mr-[9px] text-[#c9cacc]"><use href="#grip"/></svg>Username</div>
            </div>
            <div class="flex-1 bg-white flex items-center pl-[12px] text-[#999]">
              <svg class="w-[18px] h-[18px]"><use href="#help"/></svg>
              <svg class="w-[15px] h-[20px] ml-[11px]"><use href="#play"/></svg>
              <span class="flex-1"></span>
              <svg class="w-[20px] h-[20px]"><use href="#search"/></svg>
              <svg class="w-[18px] h-[18px] ml-[11px] mr-[13px]"><use href="#gear"/></svg>
            </div>
          </div>

          <div class="w-[51px] shrink-0 flex justify-center pt-[18px] text-[#aaa9a5]"><svg class="w-[14px] h-[14px]"><use href="#plus"/></svg></div>

          <!-- inner If/Else -->
          <div class="w-[304px] h-[472.500px] shrink-0 rounded-[10px] overflow-hidden bg-white shadow-[0_1px_6px_rgba(0,0,0,0.12)] flex flex-col">
            <div class="relative h-[68px] shrink-0 flex bg-white font-['Lato',sans-serif] font-normal border-b border-[#e4e4e6]">
              <div class="w-[102px] h-full bg-[#6caae8] [clip-path:polygon(0_0,100%_0,69%_100%,0_100%)] flex items-center pl-[27px] text-white">
                <svg class="w-[26px] h-[30px]"><use href="#share"/></svg>
              </div>
              <div class="flex flex-col justify-center">
                <span class="text-[13px] leading-[14px] text-[#bbb]">Branching</span>
                <span class="text-[20px] leading-[23px] text-[#666]">If/Else</span>
              </div>
              <svg class="absolute top-[5px] right-[25px] w-[15px] h-[15px] text-[#a6a6a6]"><use href="#expand"/></svg>
              <svg class="absolute top-[7px] right-[4px] w-[13px] h-[13px] text-[#a6a6a6]"><use href="#close"/></svg>
            </div>
            <div class="h-[366.500px] shrink-0 bg-[#f9f9f9] pt-[18.500px]">
              <div class="flex items-center h-5 ml-[13px] w-[257px] font-['Lato',sans-serif] font-normal text-[15px] text-[#999]">Compare<span class="flex-1 ml-[12px] border-t border-dashed border-[#ddd]"></span></div>
              <div class="ml-[22px] mt-[11.500px] w-[258px] h-5 flex items-center justify-between text-[15px] font-normal text-[#777]"><span>value a</span><span class="flex items-center text-[18px]">Aa<svg class="w-[9px] h-[6px] ml-[1px]"><use href="#caret"/></svg></span></div>
              <div class="flex items-center h-[46px] w-[260.500px] ml-[22px] mt-[1.500px] bg-white rounded-[5px] border-2 border-[#d6d7d9] border-l-[6px] border-l-black"><svg class="w-[12px] h-[25px] ml-[6px] text-[#c9cacc]"><use href="#grip"/></svg><span class="w-8 h-8 ml-[4px] mr-[5px] rounded-full bg-[#6b6b6b] flex items-center justify-center text-white"><svg class="w-[20px] h-[20px]"><use href="#octo"/></svg></span>Username</div>
              <div class="ml-[22px] mt-[8px] h-5 flex items-center text-[15px] font-normal text-[#777]">comparison</div>
              <div class="relative flex items-center h-[45px] w-[260.500px] ml-[22px] mt-[2px] bg-white rounded-[4px] border border-[#d6d7d9] pl-[10px] font-normal text-black">is not empty<svg class="absolute right-[4px] top-[18px] w-[8px] h-[8px] text-[#999]"><use href="#caret"/></svg></div>
              <div class="ml-[22px] mt-[7.500px] w-[258px] h-5 flex items-center justify-between text-[15px] font-normal text-[#777]"><span>value b</span><span class="flex items-center text-[18px]">Aa<svg class="w-[9px] h-[6px] ml-[1px]"><use href="#caret"/></svg></span></div>
              <textarea class="block ml-[22px] mt-[2px] w-[260.500px] h-[49px] rounded-[4px] border border-b-2 border-[#d6d7d9] bg-white overflow-hidden"></textarea>
              <div class="w-[152px] h-[41.500px] mx-auto mt-[28px] rounded-[3px] bg-[#2c64d6] text-white text-[16px] font-normal flex items-center justify-center">Save</div>
            </div>
            <div class="flex-1 bg-white flex items-center pl-[12px] text-[#999]">
              <svg class="w-[18px] h-[18px]"><use href="#help"/></svg>
              <span class="flex-1"></span>
              <svg class="w-[20px] h-[20px]"><use href="#search"/></svg>
              <svg class="w-[18px] h-[18px] ml-[11px] mr-[13px]"><use href="#pencil"/></svg>
            </div>
          </div>

          <div class="w-[51px] shrink-0 flex justify-center pt-[18px] text-[#aaa9a5]"><svg class="w-[14px] h-[14px]"><use href="#plus"/></svg></div>
        </div>

        <!-- false branch -->
        <div class="h-[399px] bg-[#f2f5fd] pt-[16px] flex items-start">
          <div class="w-[51px] shrink-0 flex justify-center pt-[18px] text-[#aaa9a5]"><svg class="w-[14px] h-[14px]"><use href="#plus"/></svg></div>

          <!-- Compose -->
          <div class="w-[570px] h-[361px] shrink-0 rounded-[10px] overflow-hidden bg-white shadow-[0_1px_6px_rgba(0,0,0,0.12)] flex flex-col">
            <div class="relative h-[68px] shrink-0 flex bg-white font-['Lato',sans-serif] font-normal border-b-2 border-[#e4e4e6]">
              <div class="w-[102px] h-full bg-[#a3c965] [clip-path:polygon(0_0,100%_0,68%_100%,0_100%)] flex items-start pl-[25px] pt-[25px] text-white font-['Liberation_Serif',serif]">
                <span class="text-[28px] leading-none">“</span><span class="text-[28px] leading-none ml-[9px] mt-[9px]">”</span>
              </div>
              <div class="flex flex-col justify-center">
                <span class="text-[13px] leading-[14px] text-[#bbb]">Text</span>
                <span class="text-[20px] leading-[23px] text-[#666]">Compose</span>
              </div>
              <svg class="absolute top-[7px] right-[4px] w-[13px] h-[13px] text-[#a6a6a6]"><use href="#close"/></svg>
            </div>
            <div class="h-[175px] shrink-0 bg-white pl-[31.500px] pt-[34px] text-[17.500px] leading-[26px] text-[#555]">
              <span class="bg-[#d4ecf9] px-[6px] py-[2px] rounded-[2px]">Alternate ID</span> has not passed the requisite assessment and there<br>fore was not granted access to the <span class="bg-[#d4ecf9] px-[6px] py-[2px] rounded-[2px]">GitHub Organization</span> /<br><span class="bg-[#d4ecf9] px-[6px] py-[2px] rounded-[2px]">Repository</span> repository.
            </div>
            <div class="h-[80px] shrink-0 bg-[#ecedef] pt-[14px]">
              <div class="flex items-center h-[45px] w-[527px] ml-[21px] bg-white rounded-[5px] border-2 border-[#d6d7d9] border-l-[6px] border-l-[#a3c965]"><svg class="w-[12px] h-[25px] ml-[6px] mr-[8px] text-[#c9cacc]"><use href="#grip"/></svg>output</div>
            </div>
            <div class="flex-1 bg-white flex items-center pl-[12px] text-[#999]">
              <svg class="w-[18px] h-[18px]"><use href="#help"/></svg>
              <svg class="w-[15px] h-[20px] ml-[11px]"><use href="#play"/></svg>
              <span class="flex-1"></span>
              <svg class="w-[20px] h-[20px]"><use href="#search"/></svg>
              <svg class="w-[18px] h-[18px] ml-[11px] mr-[13px]"><use href="#gear"/></svg>
            </div>
          </div>

          <div class="w-[50px] shrink-0 flex justify-center pt-[18px] text-[#aaa9a5]"><svg class="w-[14px] h-[14px]"><use href="#plus"/></svg></div>

          <!-- Note: Access Denied -->
          <div class="w-[289px] shrink-0 rounded-[10px] overflow-hidden bg-white shadow-[0_1px_6px_rgba(0,0,0,0.12)]">
            <div class="h-[44px] bg-[#72c98a] text-white flex items-center pl-[14px] pr-[14px] font-['Lato',sans-serif] font-normal">
              <svg class="w-[15px] h-[16px]"><use href="#note"/></svg>
              <span class="ml-[14px] text-[18px]">Note</span>
              <svg class="w-4 h-4 ml-[12px]"><use href="#help"/></svg>
              <span class="flex-1"></span>
              <svg class="w-[13px] h-[13px]"><use href="#close"/></svg>
            </div>
            <div class="h-[13px] bg-[#f9f9f9]"></div>
            <div class="h-[257px] px-[14px] pt-[9px] font-['Inter',sans-serif] font-normal text-[16px] leading-[28.500px] text-[#222] whitespace-nowrap">
              <h3 class="text-[18px] font-bold leading-[28px] mb-[15px]">Access Denied</h3>
              <p>At this point, the user has not<br>been granted access to the<br>GitHub repository. If desired, a<br>notification can be posted to<br>admins via email, Slack or<br>another Okta workflow<br>connection.</p>
            </div>
            <div class="h-[13px] bg-[#f9f9f9]"></div>
          </div>

          <div class="w-[51px] shrink-0 flex justify-center pt-[18px] text-[#aaa9a5]"><svg class="w-[14px] h-[14px]"><use href="#plus"/></svg></div>
        </div>
      </div>

      <!-- outputs panel -->
      <div class="relative flex-1 bg-[#f9f9f9] pt-[11px]">
        <svg class="absolute left-[21px] top-[91px] w-[25px] h-[86px]" viewBox="0 0 25 86" fill="none"><path d="M2 0v32h22" stroke="#f2c590" stroke-dasharray="3 2"/><path d="M2 32v51h22" stroke="#2c64d6" stroke-dasharray="3 2"/></svg>
        <div class="ml-[13px] h-5 flex items-center font-['Lato',sans-serif] font-normal text-[15px] text-[#666]">Outputs</div>
        <div class="flex items-center h-[44px] w-[262px] ml-[21px] mt-[16px] bg-white rounded-[5px] border-2 border-[#d6d7d9] border-l-[6px] border-l-[#6fa534]"><svg class="w-[12px] h-[25px] ml-[6px] mr-[9px] text-[#c9cacc]"><use href="#grip"/></svg>Result Message</div>
        <div class="flex items-center h-[44.500px] w-[233px] ml-[45px] mt-[5px] bg-white rounded-[5px] border-2 border-[#d6d7d9] border-l-[6px] border-l-[#6fa534]"><svg class="w-[12px] h-[25px] ml-[5px] text-[#c9cacc]"><use href="#grip"/></svg><span class="w-[31px] h-[31px] ml-[4px] mr-[6px] rounded-full bg-[#6fa534] text-white flex items-center justify-center"><svg class="w-[18px] h-[17px]"><use href="#sliders"/></svg></span>Result Message</div>
        <div class="flex items-center h-[45px] w-[233px] ml-[45px] mt-[6.500px] bg-white rounded-[5px] border-2 border-[#d6d7d9] border-l-[6px] border-l-[#a3c965]"><svg class="w-[12px] h-[25px] ml-[5px] text-[#c9cacc]"><use href="#grip"/></svg><span class="w-[31px] h-[31px] ml-[4px] mr-[6px] rounded-full bg-[#a3c965] text-white flex items-start justify-center font-['Liberation_Serif',serif] text-[16px] leading-none pt-[6px]"><span>“</span><span class="ml-[5px] mt-[5px]">”</span></span>output</div>
        <div class="flex items-center h-[42px] w-[261px] ml-[21px] mt-[14px] bg-[#fbfbfb] rounded-[5px] border-l-[6px] border-l-[#a8cc85] shadow-[0_1px_2px_rgba(0,0,0,0.08)] text-[#aaa]"><svg class="w-[12px] h-[25px] ml-[6px] mr-[9px] text-[#dedfe0]"><use href="#grip"/></svg>Click or drag to create</div>
      </div>
    </div>
    <div class="h-[39px] bg-white flex items-center pl-[12px] text-[#999]">
      <svg class="w-[18px] h-[18px]"><use href="#help"/></svg>
      <span class="flex-1"></span>
      <svg class="w-[20px] h-[20px]"><use href="#search"/></svg>
      <svg class="w-[18px] h-[18px] ml-[11px] mr-[13px]"><use href="#pencil"/></svg>
    </div>
  </div>

  <div class="w-[51px] shrink-0 flex justify-center pt-[18px] text-[#b5b5b5]"><svg class="w-[14px] h-[14px]"><use href="#plus"/></svg></div>

  <!-- Note: Notify -->
  <div class="w-[288px] shrink-0 rounded-[10px] overflow-hidden bg-white shadow-[0_1px_6px_rgba(0,0,0,0.12)]">
    <div class="h-[45px] bg-[#72c98a] text-white flex items-center pl-[14px] pr-[14px] font-['Lato',sans-serif] font-normal">
      <svg class="w-[15px] h-[16px]"><use href="#note"/></svg>
      <span class="ml-[14px] text-[18px]">Note</span>
      <svg class="w-4 h-4 ml-[12px]"><use href="#help"/></svg>
      <span class="flex-1"></span>
      <svg class="w-[13px] h-[13px]"><use href="#close"/></svg>
    </div>
    <div class="h-[12px] bg-[#f9f9f9]"></div>
    <div class="h-[201px] px-[14px] pt-[10px] font-['Inter',sans-serif] font-normal text-[16px] leading-[28.500px] text-[#222] whitespace-nowrap">
      <h3 class="text-[18px] font-bold leading-[28px] mb-[14px]">Notify</h3>
      <p>In this example we send a<br>notification message to Slack.<br>You can replace this with your<br>choice of email or messaging<br>connector.</p>
    </div>
    <div class="h-[12px] bg-[#f9f9f9]"></div>
  </div>

  <div class="w-[50px] shrink-0 flex justify-center pt-[18px] text-[#b5b5b5]"><svg class="w-[14px] h-[14px]"><use href="#plus"/></svg></div>

  <!-- Slack -->
  <div class="w-[305px] h-[669px] shrink-0 rounded-[10px] overflow-hidden bg-white shadow-[0_1px_6px_rgba(0,0,0,0.12)] flex flex-col">
    <div class="relative h-[68px] shrink-0 flex bg-white font-['Lato',sans-serif] font-normal border-b-2 border-[#f1f1f2]">
      <div class="w-[102px] h-full flex items-center pl-[21px]">
        <svg class="w-[42px] h-[42px]"><use href="#slack"/></svg>
      </div>
      <div class="flex flex-col justify-center">
        <span class="text-[13px] leading-[14px] text-[#aaa]">Slack</span>
        <span class="text-[20px] leading-[23px] text-[#666]">Send Message to<br>Channel</span>
      </div>
      <svg class="absolute top-[7px] right-[4px] w-[13px] h-[13px] text-[#a6a6a6]"><use href="#close"/></svg>
    </div>
    <div class="h-[134.500px] shrink-0 bg-white px-[9px] pt-[7px]">
      <div class="h-[78px] rounded-[4px] bg-[#e5e8f0] pt-[2px] flex flex-col items-center">
        <div class="h-[32px] flex items-center">
          <svg class="w-[30px] h-[30px]"><use href="#slack"/></svg>
          <span class="w-[33px] h-[8px] ml-[12px] mr-[13px] border-y border-dashed border-[#b9c3d6]"></span>
          <svg class="w-[30px] h-[30px]"><use href="#usercircle"/></svg>
        </div>
        <div class="w-[249px] h-[33px] mt-[7px] rounded-[3px] bg-[#97c156] text-white text-[18px] font-normal font-['Lato',sans-serif] flex items-center justify-center">Choose Connection</div>
      </div>
      <div class="h-[34px] mt-[11px] rounded-[4px] bg-[#f2f3f6] flex items-center pl-[8px] text-[15px] font-normal font-['Lato',sans-serif]">
        <svg class="w-[17px] h-[17px] text-[#aaa]"><use href="#sliders"/></svg>
        <svg class="w-[11px] h-[9px] ml-[8px] text-[#7cb342]"><use href="#check"/></svg>
        <span class="ml-[14px]">Options</span>
      </div>
    </div>
    <div class="h-[318.500px] shrink-0 bg-[#f9f9f9] pt-[17.500px]">
      <div class="flex items-center h-5 ml-[13.500px] w-[260px] font-['Lato',sans-serif] font-normal text-[15px] text-[#999]">Message<span class="flex-1 ml-[12px] border-t border-dashed border-[#ddd]"></span></div>
      <div class="ml-[22px] mt-[11px] w-[259px] h-5 flex items-center justify-between text-[15px] font-normal text-[#777]"><span>Text<span class="text-[#e53935]">*</span></span><span class="flex items-center text-[18px]">Aa<svg class="w-[9px] h-[6px] ml-[1px]"><use href="#caret"/></svg></span></div>
      <div class="flex items-center h-[46.500px] w-[260px] ml-[23px] mt-[1px] bg-white rounded-[5px] border-2 border-[#d6d7d9] border-l-[6px] border-l-[#6fa534]"><svg class="w-[12px] h-[25px] ml-[5px] text-[#c9cacc]"><use href="#grip"/></svg><span class="w-8 h-8 ml-[4px] mr-[5px] rounded-full bg-[#6fa534] text-white flex items-center justify-center"><svg class="w-[18px] h-[17px]"><use href="#sliders"/></svg></span>Result Message</div>
      <div class="flex items-center h-5 mt-[7.500px] ml-[13.500px] w-[260px] font-['Lato',sans-serif] font-normal text-[15px] text-[#999]">Slackbot<span class="flex-1 ml-[12px] border-t border-dashed border-[#ddd]"></span></div>
      <div class="ml-[22px] mt-[12px] w-[259px] h-5 flex items-center justify-between text-[15px] font-normal text-[#777]"><span>Name</span><span class="flex items-center text-[18px]">Aa<svg class="w-[9px] h-[6px] ml-[1px]"><use href="#caret"/></svg></span></div>
      <textarea class="block ml-[23px] w-[260px] h-[50px] rounded-[4px] border border-b-2 border-[#d6d7d9] bg-white pl-[10px] pr-[10px] pt-[10px] text-[18px] leading-[25px] font-normal text-black overflow-hidden">Okta Workflows Notifier</textarea>
      <div class="ml-[22px] mt-[7px] w-[259px] h-5 flex items-center justify-between text-[15px] font-normal text-[#777]"><span>Icon Emoji</span><span class="flex items-center text-[18px]">Aa<svg class="w-[9px] h-[6px] ml-[1px]"><use href="#caret"/></svg></span></div>
      <textarea class="block ml-[23px] mt-[2.500px] w-[260px] h-[48px] rounded-[4px] border border-b-2 border-[#d6d7d9] bg-white pl-[10px] pr-[10px] pt-[9px] text-[18px] leading-[25px] font-normal text-black overflow-hidden">bell</textarea>
    </div>
    <div class="h-[110px] shrink-0 bg-[#ecedef] pt-[17px]">
      <div class="flex items-center h-5 ml-[13.500px] w-[260px] font-['Lato',sans-serif] font-normal text-[15px] text-[#999]">Message<span class="flex-1 ml-[12px] border-t border-dashed border-[#d5d5d5]"></span></div>
      <div class="flex items-center h-[45.500px] w-[262px] ml-[22px] mt-[7.500px] bg-white rounded-[5px] border-2 border-[#d6d7d9]"><svg class="w-[12px] h-[25px] ml-[10px] mr-[8px] text-[#c9cacc]"><use href="#grip"/></svg>Timestamp</div>
    </div>
    <div class="flex-1 bg-white flex items-center pl-[13px] text-[#999]">
      <svg class="w-[18px] h-[18px]"><use href="#help"/></svg>
      <svg class="w-[15px] h-[20px] ml-[11px]"><use href="#play"/></svg>
      <span class="flex-1"></span>
      <svg class="w-[20px] h-[20px]"><use href="#search"/></svg>
      <svg class="w-[18px] h-[18px] ml-[11px] mr-[13px]"><use href="#gear"/></svg>
    </div>
  </div>

</div>
</body>
</html>
